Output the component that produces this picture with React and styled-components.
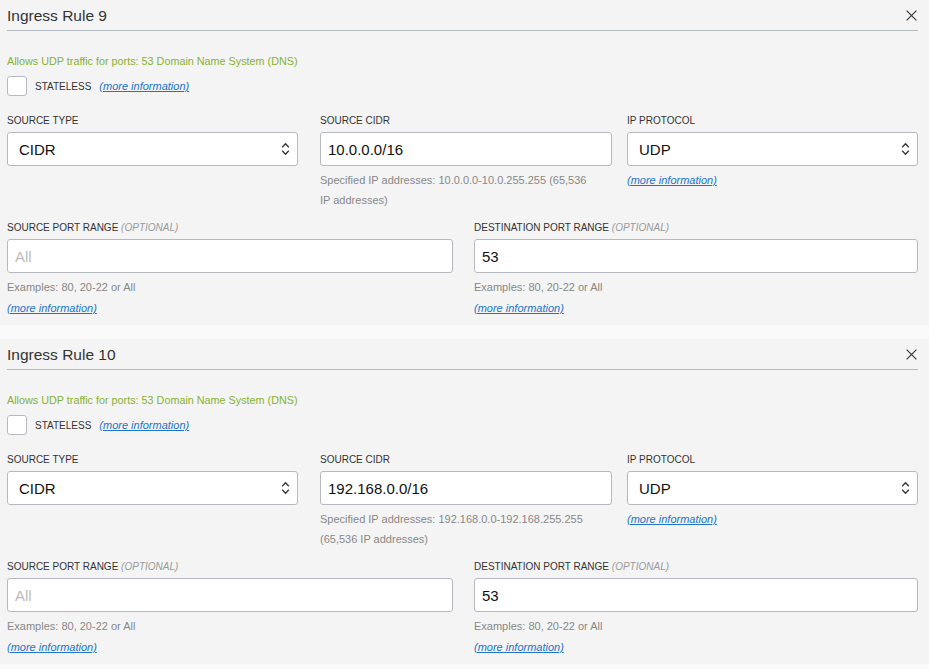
import React from 'react'
import styled, { createGlobalStyle } from 'styled-components'

const GlobalStyle = createGlobalStyle`
  body {
    margin: 0;
    background: #fafafa;
    font-family: "Liberation Sans", Arial, sans-serif;
    color: #333;
  }
`

const Page = styled.div`
  display: flex;
  flex-direction: column;
  gap: 14px;
`

const Panel = styled.section`
  background: #f4f4f4;
  padding: 0 11px 7px 7px;
`

const Header = styled.div`
  height: 30px;
  display: flex;
  align-items: center;
  justify-content: space-between;
  border-bottom: 1px solid #b4bac1;
`

const Title = styled.h2`
  margin: 0;
  font-size: 15.5px;
  font-weight: normal;
  color: #333;
  padding-top: 1px;
`

const CloseButton = styled.button`
  border: 0;
  background: none;
  padding: 0;
  width: 12px;
  height: 12px;
  display: flex;
  align-items: center;
  justify-content: center;
  margin-right: 1px;
  cursor: pointer;
`

const Notice = styled.div`
  margin-top: 20px;
  font-size: 10.8px;
  line-height: 20px;
  color: #86b232;
`

const CheckRow = styled.div`
  margin-top: 5px;
  display: flex;
  align-items: center;
  height: 20px;
  font-size: 10px;
  color: #333;
`

const Checkbox = styled.span`
  width: 18px;
  height: 18px;
  border: 1px solid #b6bac0;
  border-radius: 3px;
  background: #fff;
  margin-right: 8px;
`

const Link = styled.a`
  font-size: 11px;
  font-style: italic;
  color: #2273c7;
  text-decoration: underline;
  margin-left: ${p => p.$inline ? '8px' : '0'};
  cursor: pointer;
`

const Row = styled.div`
  display: grid;
  grid-template-columns: ${p => p.$cols};
  margin-top: ${p => p.$top}px;
  align-items: start;
`

const Field = styled.div`
  display: flex;
  flex-direction: column;
  padding-right: ${p => p.$gutter || 0}px;
  min-width: 0;
`

const Label = styled.label`
  font-size: 10px;
  line-height: 15px;
  color: #333;
  margin-bottom: 4px;
`

const Optional = styled.span`
  font-style: italic;
  color: #9a9a9a;
`

const TextInput = styled.input`
  box-sizing: border-box;
  height: 34px;
  width: 100%;
  border: 1px solid #b6bac0;
  border-radius: 3px;
  background: #fff;
  padding: 0 7px;
  font-family: "Liberation Sans", Arial, sans-serif;
  font-size: 15px;
  color: #111;
  outline: none;

  &::placeholder {
    color: #bcbcbc;
  }
`

const SelectBox = styled.div`
  box-sizing: border-box;
  height: 34px;
  border: 1px solid #b6bac0;
  border-radius: 3px;
  background: #fff;
  padding: 0 7px 0 11px;
  display: flex;
  align-items: center;
  justify-content: space-between;
  font-size: 15px;
  color: #111;
`

const Helper = styled.div`
  margin-top: 4px;
  font-size: 11px;
  line-height: 20px;
  color: #888;
  padding-right: ${p => p.$wrap || 0}px;
`

const LinkLine = styled.div`
  margin-top: ${p => p.$top || 0}px;
  line-height: 20px;
`

const Chevrons = () => (
  <svg width="9" height="14" viewBox="0 0 9 14" fill="none" stroke="#333" strokeWidth="1.3">
    <path d="M1.2 5.2 L4.5 1.8 L7.8 5.2" />
    <path d="M1.2 8.8 L4.5 12.2 L7.8 8.8" />
  </svg>
)

const CloseIcon = () => (
  <svg width="11" height="11" viewBox="0 0 11 11" stroke="#3a3f45" strokeWidth="1.3">
    <path d="M0.6 0.6 L10.4 10.4 M10.4 0.6 L0.6 10.4" />
  </svg>
)

const Select = ({ value }) => (
  <SelectBox>
    <span>{value}</span>
    <Chevrons />
  </SelectBox>
)

const rules = [
  { num: 9, cidr: '10.0.0.0/16', range: '10.0.0.0-10.0.255.255 (65,536 IP addresses)' },
  { num: 10, cidr: '192.168.0.0/16', range: '192.168.0.0-192.168.255.255 (65,536 IP addresses)' },
]

const PortField = ({ label, gutter, ...inputProps }) => (
  <Field $gutter={gutter}>
    <Label>{label} <Optional>(OPTIONAL)</Optional></Label>
    <TextInput {...inputProps} />
    <Helper>
      Examples: 80, 20-22 or All
      <LinkLine $top={1}>
        <Link>(more information)</Link>
      </LinkLine>
    </Helper>
  </Field>
)

const IngressRule = ({ rule }) => (
  <Panel>
    <Header>
      <Title>Ingress Rule {rule.num}</Title>
      <CloseButton aria-label="Remove">
        <CloseIcon />
      </CloseButton>
    </Header>
    <Notice>Allows UDP traffic for ports: 53 Domain Name System (DNS)</Notice>
    <CheckRow>
      <Checkbox />
      STATELESS
      <Link $inline>(more information)</Link>
    </CheckRow>

    <Row $cols="313px 307px 1fr" $top={17}>
      <Field $gutter={22}>
        <Label>SOURCE TYPE</Label>
        <Select value="CIDR" />
      </Field>
      <Field $gutter={15}>
        <Label>SOURCE CIDR</Label>
        <TextInput defaultValue={rule.cidr} />
        <Helper $wrap={16}>Specified IP addresses: {rule.range}</Helper>
      </Field>
      <Field>
        <Label>IP PROTOCOL</Label>
        <Select value="UDP" />
        <Helper>
          <LinkLine>
            <Link>(more information)</Link>
          </LinkLine>
        </Helper>
      </Field>
    </Row>

    <Row $cols="467px 1fr" $top={10}>
      <PortField label="SOURCE PORT RANGE" gutter={21} placeholder="All" />
      <PortField label="DESTINATION PORT RANGE" defaultValue="53" />
    </Row>
  </Panel>
)

const App = () => {
  return (
    <>
      <GlobalStyle />
      <Page>
        {rules.map(r => (
          <IngressRule key={r.num} rule={r} />
        ))}
      </Page>
    </>
  )
}

export default App
